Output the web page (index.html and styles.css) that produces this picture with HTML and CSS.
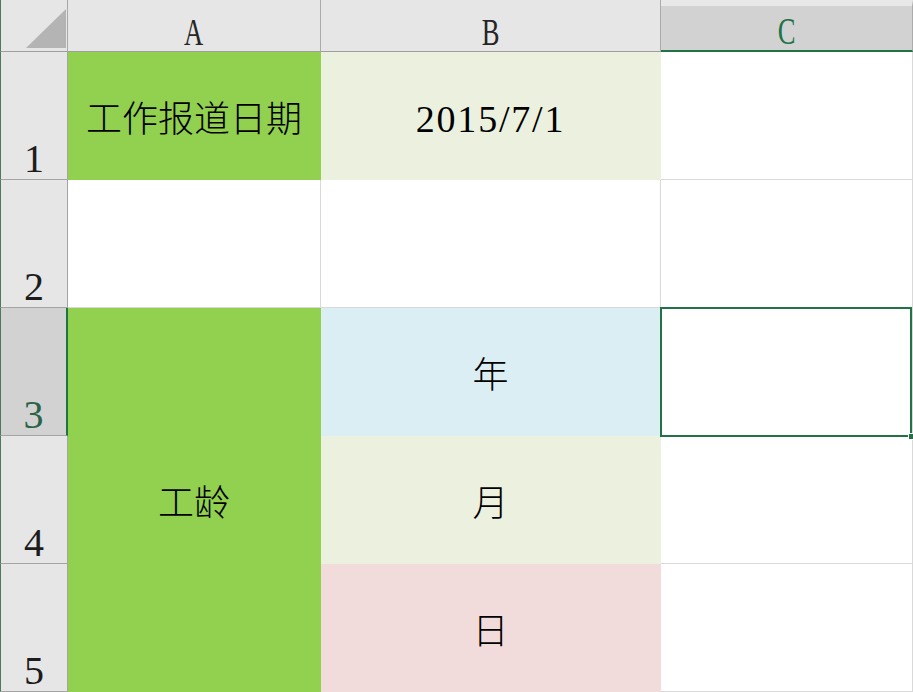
FILE: index.html
```html
<!DOCTYPE html>
<html lang="zh">
<head>
<meta charset="utf-8">
<title>Sheet</title>
<link rel="stylesheet" href="styles.css">
</head>
<body>
<div class="sheet">
  <div class="corner">
    <svg class="tri" width="67" height="51" viewBox="0 0 67 51"><polygon points="25,48 65,9 65,48" fill="#b4b4b4"/></svg>
  </div>
  <div class="ch"><span>A</span></div>
  <div class="ch"><span>B</span></div>
  <div class="ch ch-active"><span>C</span></div>

  <div class="rh">1</div>
  <div class="c green cjk">工作报道日期</div>
  <div class="c beige num">2015/7/1</div>
  <div class="c"></div>

  <div class="rh">2</div>
  <div class="c"></div>
  <div class="c"></div>
  <div class="c"></div>

  <div class="rh rh-active">3</div>
  <div class="c green cjk merged">工龄</div>
  <div class="c blue cjk">年</div>
  <div class="c sel"></div>

  <div class="rh">4</div>
  <div class="c beige cjk">月</div>
  <div class="c"></div>

  <div class="rh">5</div>
  <div class="c pink cjk">日</div>
  <div class="c"></div>
</div>
</body>
</html>
```

FILE: styles.css
```css
html, body {
  margin: 0;
  padding: 0;
  background: #ffffff;
}

body {
  width: 913px;
  height: 692px;
  overflow: hidden;
}

.sheet {
  display: grid;
  grid-template-columns: 68px 253px 340px 252px;
  grid-template-rows: 52px repeat(5, 128px);
  width: 913px;
  height: 692px;
}

.corner {
  box-sizing: border-box;
  background: #e6e6e6;
  border-left: 1px solid #4d7a5e;
  border-right: 1px solid #a8a8a8;
  border-bottom: 1px solid #9e9e9e;
  position: relative;
}

.tri {
  display: block;
}

.ch {
  box-sizing: border-box;
  background: #e6e6e6;
  border-right: 1px solid #ababab;
  border-bottom: 1px solid #9e9e9e;
  display: flex;
  align-items: flex-end;
  justify-content: center;
  font-family: "Liberation Serif", serif;
  font-size: 38px;
  line-height: 1;
  color: #262626;
}

.ch span {
  display: inline-block;
  transform: scaleX(0.7);
}

.ch-active {
  background: #d2d2d2;
  border-top: 6px solid #e8e8e8;
  border-bottom: 2px solid #217346;
  color: #217346;
}

.rh {
  box-sizing: border-box;
  background: #e6e6e6;
  border-left: 1px solid #4d7a5e;
  border-right: 1px solid #a4a4a4;
  border-bottom: 1px solid #a4a4a4;
  display: flex;
  align-items: flex-end;
  justify-content: center;
  font-family: "Liberation Serif", serif;
  font-size: 40px;
  line-height: 1;
  color: #1c1c1c;
}

.rh-active {
  background: #d2d2d2;
  border-right: 2px solid #217346;
  color: #2a6446;
}

.c {
  box-sizing: border-box;
  background: #ffffff;
  border-right: 1px solid #d9d9d9;
  border-bottom: 1px solid #d9d9d9;
  display: flex;
  align-items: center;
  justify-content: center;
  padding-top: 6px;
  color: #000000;
}

.green {
  background: #92d050;
  border-color: transparent;
}

.beige {
  background: #ebf1de;
  border-color: transparent;
}

.blue {
  background: #daeef3;
  border-color: transparent;
}

.pink {
  background: #f2dcdb;
  border-color: transparent;
}

.merged {
  grid-row: span 3;
}

.cjk {
  font-family: "Noto Sans CJK SC", sans-serif;
  font-weight: 300;
  font-size: 36px;
  line-height: 1;
  padding-top: 0;
}

.num {
  font-family: "Liberation Serif", serif;
  font-size: 38px;
  letter-spacing: 1.8px;
  line-height: 1;
}

.sel {
  position: relative;
}

.sel::after {
  content: "";
  position: absolute;
  left: -1px;
  top: -1px;
  right: 0;
  bottom: -2px;
  border: 2px solid #217346;
}

.sel::before {
  content: "";
  position: absolute;
  right: -3px;
  bottom: -5px;
  width: 5px;
  height: 5px;
  background: #217346;
  border: 1px solid #ffffff;
  z-index: 1;
}
```
